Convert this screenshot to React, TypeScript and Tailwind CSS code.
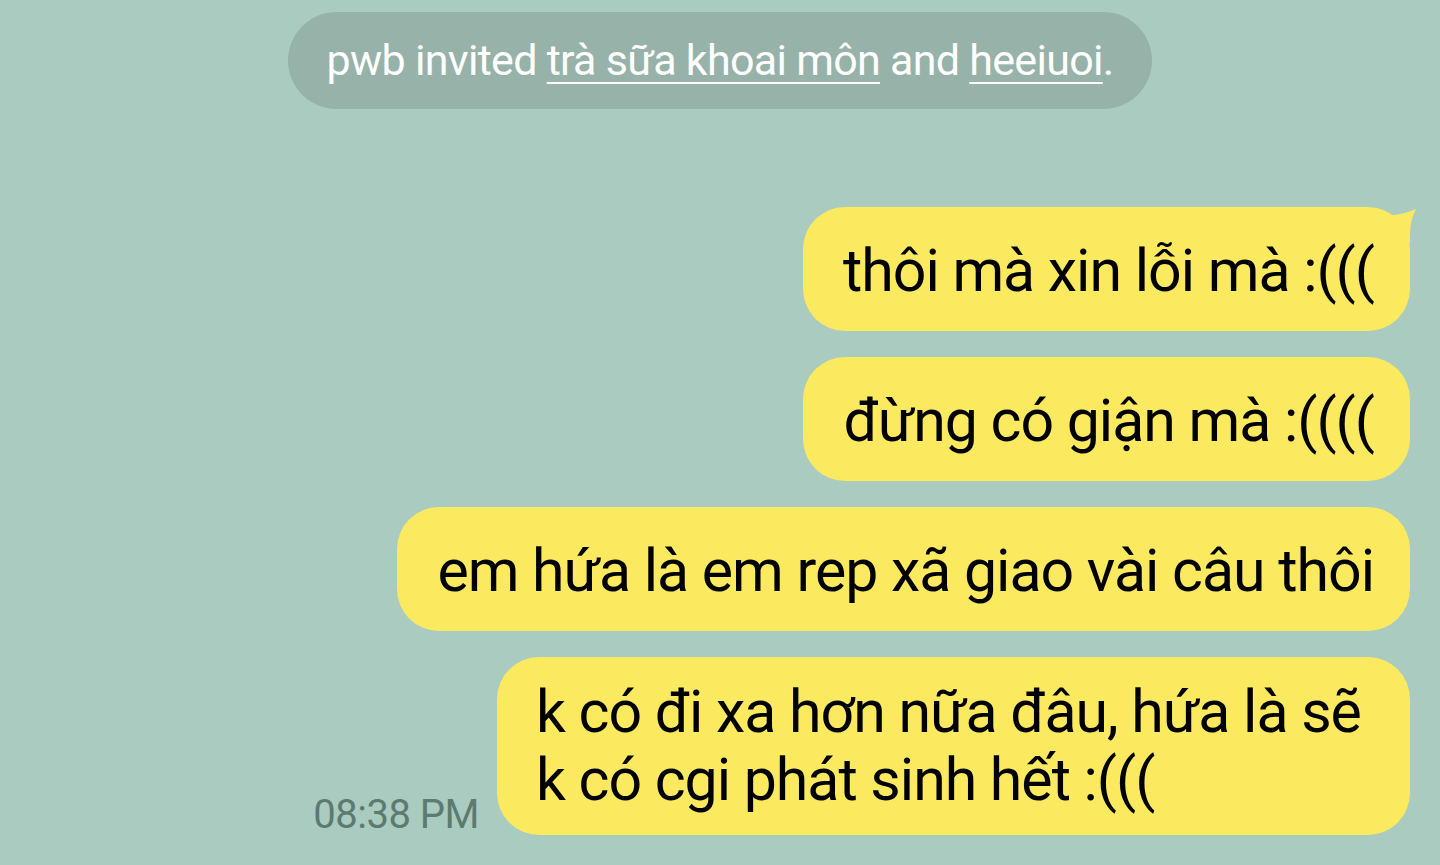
const bubbles = [
  { text: "thôi mà xin lỗi mà :(((", tail: true },
  { text: "đừng có giận mà :((((" },
  { text: "em hứa là em rep xã giao vài câu thôi" },
];

// little "ear" on the first bubble's top-right corner
function Tail() {
  return (
    <svg
      className="absolute -right-[10px] top-0"
      width="40"
      height="40"
      viewBox="0 0 40 40"
    >
      <path d="M6 8 Q20 9 36 2 Q29 14 30 36 L6 36 Z" fill="#fbe95f" />
    </svg>
  );
}

export default function App() {
  return (
    <main
      className="w-[1440px] h-[865px] overflow-hidden bg-[#aacbbf] flex flex-col"
      style={{ fontFamily: "Roboto, 'Noto Sans', sans-serif" }}
    >
      <div className="flex justify-center pt-[12px]">
        <div className="h-[97px] w-[864px] rounded-full bg-[#97b2a8] flex items-center justify-center text-white text-[43px] tracking-[-0.7px]">
          <span>
            pwb invited <span className="underline underline-offset-[7px] decoration-2">trà sữa khoai môn</span> and{" "}
            <span className="underline underline-offset-[7px] decoration-2">heeiuoi</span>.
          </span>
        </div>
      </div>

      <div className="flex flex-col items-end gap-[26px] pr-[30px] pt-[98px] text-black text-[59px] tracking-[-1px]">
        {bubbles.map((b, i) => (
          <div
            key={i}
            className="relative h-[124px] rounded-[42px] bg-[#fbe95f] pl-[40px] pr-[36px] flex items-center leading-none"
          >
            {b.tail && <Tail />}
            <span className="relative pt-[3px]">{b.text}</span>
          </div>
        ))}

        <div className="flex items-end gap-[18px]">
          <span className="text-[40px] tracking-[-0.5px] text-[#5d7a70] leading-none">08:38 PM</span>
          <div className="w-[913px] rounded-[42px] bg-[#fbe95f] pl-[39px] pr-[30px] py-[21px] leading-[68px]">
            k có đi xa hơn nữa đâu, hứa là sẽ
            <br />
            k có cgi phát sinh hết :(((
          </div>
        </div>
      </div>
    </main>
  );
}
